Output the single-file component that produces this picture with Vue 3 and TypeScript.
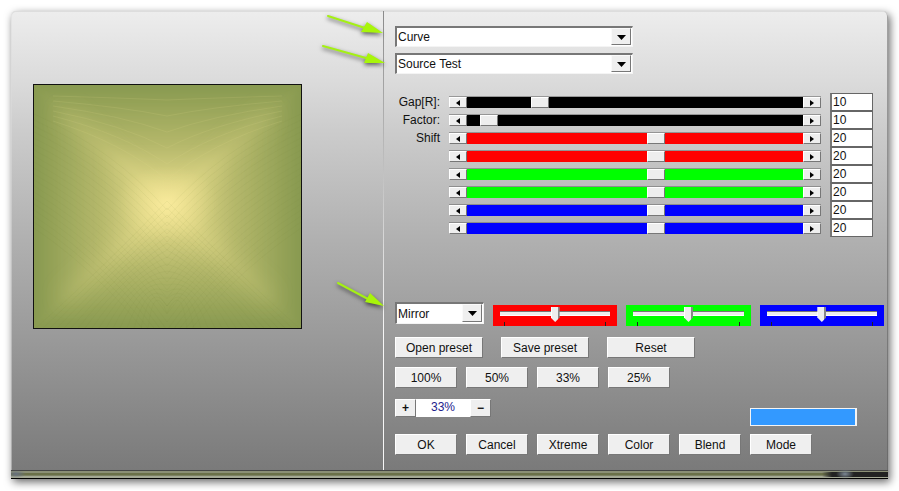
<script setup lang="ts">
import { ref } from 'vue'

interface Channel {
  id: string
  label: string
  name: string
  tone: string
  min: number
  max: number
  value: number
}

const makeShift = (id: string, label: string, name: string, tone: string): Channel => ({
  id, label, name, tone, min: -110, max: 120, value: 20,
})

const channels = ref<Channel[]>([
  { id: 'gap', label: 'Gap[R]:', name: 'Gap', tone: 'black', min: 0, max: 50, value: 10 },
  { id: 'factor', label: 'Factor:', name: 'Factor', tone: 'black', min: 0, max: 250, value: 10 },
  makeShift('s1', 'Shift', 'Shift red 1', 'red'),
  makeShift('s2', '', 'Shift red 2', 'red'),
  makeShift('s3', '', 'Shift green 1', 'green'),
  makeShift('s4', '', 'Shift green 2', 'green'),
  makeShift('s5', '', 'Shift blue 1', 'blue'),
  makeShift('s6', '', 'Shift blue 2', 'blue'),
])

const balances = ref([
  { tone: 'red', value: 50 },
  { tone: 'green', value: 50 },
  { tone: 'blue', value: 50 },
])

const presetButtons = ['Open preset', 'Save preset', 'Reset']
const scaleButtons = [100, 50, 33, 25]
const actionButtons = ['OK', 'Cancel', 'Xtreme', 'Color', 'Blend', 'Mode']

const zoom = ref(33)
const curve = ref('Curve')
const source = ref('Source Test')
const edge = ref('Mirror')

function step(c: Channel, by: number) {
  c.value = Math.min(c.max, Math.max(c.min, c.value + by))
}
</script>

<template>
  <main class="window">
    <div class="body">
      <section class="preview" aria-label="Preview">
        <svg class="image" viewBox="0 0 269 245" preserveAspectRatio="none" aria-hidden="true">
          <defs>
            <linearGradient id="side" x1="0" y1="0" x2="1" y2="0">
              <stop offset="0" stop-color="#87994f" />
              <stop offset="0.5" stop-color="#b5b86b" />
              <stop offset="1" stop-color="#f4e694" />
            </linearGradient>
            <linearGradient id="sideR" x1="1" y1="0" x2="0" y2="0">
              <stop offset="0" stop-color="#87994f" />
              <stop offset="0.5" stop-color="#b5b86b" />
              <stop offset="1" stop-color="#f4e694" />
            </linearGradient>
            <linearGradient id="top" x1="0" y1="0" x2="0" y2="1">
              <stop offset="0" stop-color="#87994f" />
              <stop offset="0.5" stop-color="#b5b86b" />
              <stop offset="1" stop-color="#f4e694" />
            </linearGradient>
            <linearGradient id="bottom" x1="0" y1="1" x2="0" y2="0">
              <stop offset="0" stop-color="#87994f" />
              <stop offset="0.5" stop-color="#b5b86b" />
              <stop offset="1" stop-color="#f4e694" />
            </linearGradient>
            <radialGradient id="glow">
              <stop offset="0" stop-color="#fff0a4" stop-opacity="0.6" />
              <stop offset="1" stop-color="#f2e492" stop-opacity="0" />
            </radialGradient>
            <filter id="soft" x="-10%" y="-10%" width="120%" height="120%">
              <feGaussianBlur stdDeviation="2" />
            </filter>
            <filter id="ridge" x="-10%" y="-10%" width="120%" height="120%">
              <feGaussianBlur stdDeviation="10" />
            </filter>
          </defs>
          <rect width="269" height="245" fill="#8b9b53" />
          <g filter="url(#soft)">
            <path d="M0 0L134 122L0 245Z" fill="url(#side)" />
            <path d="M269 0L134 122L269 245Z" fill="url(#sideR)" />
            <path d="M0 0H269L134 122Z" fill="url(#top)" />
            <path d="M0 245H269L134 122Z" fill="url(#bottom)" />
          </g>
          <path d="M30 28L239 217M239 28L30 217" fill="none" stroke="#e6dc8a" stroke-width="18" stroke-opacity="0.17" filter="url(#ridge)" />
          <ellipse cx="134" cy="120" rx="52" ry="38" fill="url(#glow)" />
          <g fill="none" stroke="#e5dd8c" stroke-opacity="0.14">
            <path v-for="n in 6" :key="'v' + n" :d="`M20 ${7 + n * 5}Q90 ${5 + n * 9} 134 ${n * 16}Q178 ${5 + n * 9} 249 ${7 + n * 5}`" />
          </g>
          <g fill="none" stroke="#75863f" stroke-opacity="0.07">
            <path v-for="n in 20" :key="'a' + n" :d="`M1 ${24 + n * 6}Q80 ${58 + n * 7} 134 ${118 + n * 8}Q188 ${58 + n * 7} 268 ${24 + n * 6}`" />
            <path v-for="n in 17" :key="'b' + n" :d="`M${n * 7 - 4} 244Q${70 + n * 3} ${180 + n} 134 ${110 + n * 7}Q${199 - n * 3} ${180 + n} ${273 - n * 7} 244`" />
          </g>
          <rect x="0.5" y="0.5" width="268" height="244" fill="none" stroke="#111" />
        </svg>
      </section>

      <section class="controls" aria-label="Settings">
        <div class="pickers">
          <div class="combo wide">
            <select v-model="curve" aria-label="Effect">
              <option>Curve</option>
            </select>
            <svg class="pointer" viewBox="0 0 64 28" aria-hidden="true"><path d="M8 2L45 14" /><path class="head" d="M47 8L63 19L41 18Z" /></svg>
          </div>
          <div class="combo wide">
            <select v-model="source" aria-label="Source">
              <option>Source Test</option>
            </select>
            <svg class="pointer" viewBox="0 0 64 28" aria-hidden="true"><path d="M3 5L46 17" /><path class="head" d="M48 12L65 22L44 22Z" /></svg>
          </div>
        </div>

        <div class="channels">
          <div v-for="c in channels" :key="c.id" class="channel">
            <label :for="c.id">{{ c.label }}</label>
            <div class="scroll" :class="c.tone">
              <button type="button" :aria-label="`${c.name} down`" @click="step(c, -1)">
                <svg viewBox="0 0 4 6" aria-hidden="true"><path d="M4 0V6L0 3Z" /></svg>
              </button>
              <input v-model.number="c.value" type="range" :min="c.min" :max="c.max" :aria-label="`${c.name} slider`">
              <button type="button" :aria-label="`${c.name} up`" @click="step(c, 1)">
                <svg viewBox="0 0 4 6" aria-hidden="true"><path d="M0 0V6L4 3Z" /></svg>
              </button>
            </div>
            <input :id="c.id" v-model.number="c.value" class="number" type="text" :aria-label="c.name">
          </div>
        </div>

        <div class="edges">
          <div class="combo">
            <select v-model="edge" aria-label="Edge mode">
              <option>Mirror</option>
            </select>
            <svg class="pointer low" viewBox="0 0 64 28" aria-hidden="true"><path d="M18 3L48 19" /><path class="head" d="M50 13L64 26L45 22Z" /></svg>
          </div>
          <div v-for="b in balances" :key="b.tone" class="balance" :class="b.tone">
            <input v-model.number="b.value" type="range" min="0" max="100" :aria-label="`${b.tone} balance`">
          </div>
        </div>

        <div class="row presets">
          <button v-for="t in presetButtons" :key="t" type="button" class="btn large">{{ t }}</button>
        </div>
        <div class="row">
          <button v-for="s in scaleButtons" :key="s" type="button" class="btn" @click="zoom = s">{{ s }}%</button>
        </div>
        <div class="status">
          <div class="zoomer">
            <button type="button" class="btn small" aria-label="Zoom in" @click="zoom++">+</button>
            <output>{{ zoom }}%</output>
            <button type="button" class="btn small" aria-label="Zoom out" @click="zoom--">−</button>
          </div>
          <div class="progress" role="progressbar" aria-label="Rendering" aria-valuenow="100"></div>
        </div>
        <div class="row actions">
          <button v-for="t in actionButtons" :key="t" type="button" class="btn">{{ t }}</button>
        </div>
      </section>
    </div>
    <div class="strip"></div>
  </main>
</template>

<style>
body {
  margin: 0;
  background: #fff;
}
</style>

<style scoped>
* {
  box-sizing: border-box;
}

.window {
  margin: 11px;
  font: 12px/14px "Liberation Sans", Arial, sans-serif;
  color: #111;
  border-radius: 5px 5px 0 0;
  box-shadow: 2px 3px 8px rgba(0, 0, 0, 0.6);
}

button,
input,
select {
  font: inherit;
  color: inherit;
  margin: 0;
  padding: 0;
}

.body {
  display: grid;
  grid-template-columns: minmax(0, 372fr) minmax(0, 505fr);
  border-radius: 5px 5px 0 0;
  background: linear-gradient(#ededed 0, #dadada 16%, #cccccc 26%, #b0b0b0 50%, #9b9b9b 70%, #7a7a7a 100%);
  box-shadow: inset 0 1px #ddd, inset -1px 0 rgba(90, 90, 90, 0.5), inset 1px 0 rgba(220, 220, 220, 0.5);
}

.preview {
  padding: 73px 81px 0 22px;
}

.image {
  display: block;
  width: 100%;
  height: 245px;
}

.controls {
  padding: 15px 4px 15px 11px;
  border-left: 1px solid #f4f4f4;
  border-image: linear-gradient(#8a8a8a, #c8c8c8 40%, #f6f6f6 70%) 1;
  border-width: 0 0 0 1px;
}

.pickers {
  display: grid;
  gap: 6px;
}

.combo {
  position: relative;
  height: 22px;
}

.combo.wide {
  width: 238px;
  height: 21px;
}

.combo select {
  appearance: none;
  width: 100%;
  height: 100%;
  padding-left: 1px;
  border: 1px solid;
  border-width: 2px 1px 1px 2px;
  border-color: #777 #f4f4f4 #f4f4f4 #777;
  border-radius: 0;
  background: #fff;
}

.combo::after {
  content: "";
  position: absolute;
  top: 2px;
  right: 2px;
  bottom: 2px;
  width: 18px;
  pointer-events: none;
  border: 1px solid;
  border-color: #fafafa #777 #777 #fafafa;
  background: #efefef;
}

.combo::before {
  content: "";
  position: absolute;
  z-index: 1;
  top: 9px;
  right: 7px;
  width: 9px;
  height: 5px;
  pointer-events: none;
  background: #000;
  clip-path: polygon(0 0, 100% 0, 50% 100%);
}

.pointer {
  position: absolute;
  right: 100%;
  bottom: 5px;
  width: 64px;
  height: 28px;
  margin-right: 11px;
  overflow: visible;
  pointer-events: none;
  fill: none;
  stroke: #a4f014;
  stroke-width: 2;
  stroke-linecap: round;
  filter: drop-shadow(0 2px 2px rgba(0, 0, 0, 0.6));
}

.pointer.low {
  bottom: 16px;
}

.pointer .head {
  fill: #a8f50a;
  stroke: none;
}

.channels {
  margin-top: 19px;
  padding-right: 11px;
}

.channel {
  display: grid;
  grid-template-columns: 45px 1fr 43px;
  column-gap: 9px;
  align-items: center;
  height: 18px;
}

.channel label {
  text-align: right;
}

.scroll {
  display: flex;
  height: 12px;
  border-top: 1px solid rgba(110, 110, 110, 0.6);
}

.scroll button {
  display: grid;
  place-items: center;
  flex: none;
  width: 18px;
  border: 1px solid;
  border-color: #fff #777 #777 #fff;
  background: #eee;
}

.scroll button svg {
  display: block;
  width: 4px;
  height: 6px;
}

.scroll input {
  appearance: none;
  flex: 1;
  min-width: 0;
  height: 11px;
  background: var(--tone);
}

.scroll input::-webkit-slider-thumb {
  appearance: none;
  width: 18px;
  height: 11px;
  border: 1px solid;
  border-color: #fff #777 #777 #fff;
  background: #eee;
}

.black { --tone: #000; }
.red { --tone: #f00; }
.green { --tone: #0f0; }
.blue { --tone: #00f; }

.number {
  width: 100%;
  height: 18px;
  padding-left: 1px;
  border: 1px solid #666;
  border-left: 2px solid #777;
  border-radius: 0;
  background: #fff;
}

.edges {
  display: grid;
  grid-template-columns: 89px repeat(3, 1fr);
  gap: 9px;
  align-items: start;
  margin-top: 65px;
}

.balance {
  height: 21px;
  margin-top: 3px;
  padding: 2px 7px 0;
  background:
    linear-gradient(#222, #222) 11px 100% / 1px 4px no-repeat,
    linear-gradient(#222, #222) calc(100% - 11px) 100% / 1px 4px no-repeat,
    var(--tone);
}

.balance input {
  appearance: none;
  display: block;
  width: 100%;
  height: 15px;
  background: linear-gradient(#777 0 1px, #eee 1px 4px, #fff 4px) 0 4px / 100% 5px no-repeat;
}

.balance input::-webkit-slider-thumb {
  appearance: none;
  width: 9px;
  height: 15px;
  background: linear-gradient(90deg, #fff 1px, #eee 1px 7px, #888 7px);
  clip-path: polygon(0 0, 100% 0, 100% 70%, 50% 100%, 0 70%);
}

.row {
  display: flex;
  gap: 9px;
  margin-top: 9px;
}

.row.presets {
  gap: 18px;
  margin-top: 11px;
}

.row.actions {
  margin-top: 8px;
}

.btn {
  width: 62px;
  height: 21px;
  border: 1px solid;
  border-color: #fff #777 #777 #fff;
  border-radius: 0;
  background: #efefef;
  white-space: nowrap;
}

.btn.large {
  width: 88px;
}

.btn.small {
  width: 21px;
  height: 18px;
  font-weight: bold;
  line-height: 14px;
}

.status {
  display: flex;
  justify-content: space-between;
  height: 27px;
  margin: 11px 27px 0 0;
}

.zoomer {
  display: flex;
  height: 18px;
}

.zoomer output {
  width: 54px;
  padding-top: 1px;
  background: #fff;
  color: #22228c;
  text-align: center;
}

.progress {
  align-self: end;
  width: 107px;
  height: 18px;
  border: 1px solid #f4f4f4;
  border-right-width: 2px;
  background: #39f;
}

.strip {
  height: 9px;
  background:
    radial-gradient(ellipse 10px 4px at 5px 4px, #667080, transparent),
    radial-gradient(ellipse 9px 5px at calc(100% - 43px) 4px, #7c8894, transparent),
    linear-gradient(90deg, transparent calc(100% - 66px), #222 calc(100% - 56px)) 0 2px / 100% 5px no-repeat,
    linear-gradient(#444 0 1px, #8b8f75 1px 3px, #6a7048 3px 5px, #7c8162 5px 6px, #a4a894 6px 8px, #000 8px);
}
</style>
